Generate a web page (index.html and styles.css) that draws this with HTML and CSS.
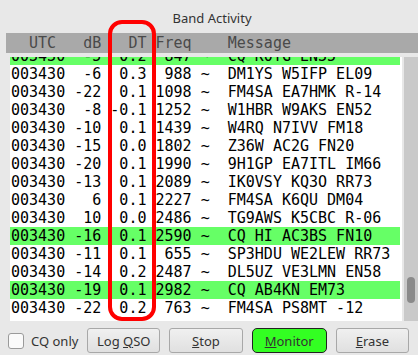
FILE: index.html
```html
<!DOCTYPE html>
<html>
<head>
<meta charset="utf-8">
<link rel="stylesheet" href="styles.css">
</head>
<body>
<div class="window">
  <div class="title">Band Activity</div>
  <div class="colhead">  UTC   dB   DT Freq    Message</div>
  <div class="listwrap">
    <div class="list">
      <div class="rows">
        <div class="row cq">003430  -5  0.2  847 ~  CQ K0TG EN35</div>
        <div class="row">003430  -6  0.3  988 ~  DM1YS W5IFP EL09</div>
        <div class="row">003430 -22  0.1 1098 ~  FM4SA EA7HMK R-14</div>
        <div class="row">003430  -8 -0.1 1252 ~  W1HBR W9AKS EN52</div>
        <div class="row">003430 -10  0.1 1439 ~  W4RQ N7IVV FM18</div>
        <div class="row">003430 -15  0.0 1802 ~  Z36W AC2G FN20</div>
        <div class="row">003430 -20  0.1 1990 ~  9H1GP EA7ITL IM66</div>
        <div class="row">003430 -13  0.1 2089 ~  IK0VSY KQ3O RR73</div>
        <div class="row">003430   6  0.1 2227 ~  FM4SA K6QU DM04</div>
        <div class="row">003430  10  0.0 2486 ~  TG9AWS K5CBC R-06</div>
        <div class="row cq">003430 -16  0.1 2590 ~  CQ HI AC3BS FN10</div>
        <div class="row">003430 -11  0.1  655 ~  SP3HDU WE2LEW RR73</div>
        <div class="row">003430 -14  0.2 2487 ~  DL5UZ VE3LMN EN58</div>
        <div class="row cq">003430 -19  0.1 2982 ~  CQ AB4KN EM73</div>
        <div class="row">003430 -22  0.2  763 ~  FM4SA PS8MT -12</div>
      </div>
    </div>
    <div class="scrollbar"><div class="thumb"></div></div>
  </div>
  <div class="controls">
    <label class="check"><span class="box"></span>CQ only</label>
    <button class="btn">Log <u>Q</u>SO</button>
    <button class="btn"><u>S</u>top</button>
    <button class="btn monitor"><u>M</u>onitor</button>
    <button class="btn"><u>E</u>rase</button>
  </div>
  <div class="highlight"></div>
</div>
</body>
</html>
```

FILE: styles.css
```css
html, body {
  margin: 0;
  padding: 0;
  background: #e8e8e8;
}
.window {
  position: relative;
  width: 418px;
  height: 355px;
  overflow: hidden;
  font-family: "Noto Sans", "DejaVu Sans", sans-serif;
  color: #333;
}
.title {
  height: 33px;
  line-height: 36px;
  text-align: center;
  font-size: 13px;
  padding-left: 6px;
  box-sizing: border-box;
}
.colhead {
  margin-left: 6px;
  height: 20px;
  line-height: 20px;
  background: #a9a9a9;
  color: #4a4a4a;
  font-family: "DejaVu Sans Mono", monospace;
  font-size: 15px;
  white-space: pre;
  padding-left: 5px;
}
.listwrap {
  display: flex;
  margin-top: 4px;
  margin-left: 10px;
  height: 264px;
}
.list {
  width: 392px;
  background: #fff;
  overflow: hidden;
}
.rows {
  margin-top: -10px;
}
.row {
  height: 18px;
  line-height: 18px;
  font-family: "DejaVu Sans Mono", monospace;
  font-size: 15px;
  color: #000;
  white-space: pre;
  padding-left: 1px;
}
.row.cq {
  background: #66ff66;
  margin-right: 2px;
}
.scrollbar {
  position: relative;
  width: 14px;
  margin-left: 2px;
  background: #c9c9c9;
}
.thumb {
  position: absolute;
  left: 3px;
  top: 220px;
  width: 8px;
  height: 26px;
  border-radius: 4px;
  background: #8a8a8a;
}
.controls {
  display: flex;
  align-items: center;
  margin-top: 7px;
  padding-left: 8px;
  height: 25px;
}
.check {
  display: flex;
  align-items: center;
  font-size: 13px;
  color: #333;
  width: 80px;
}
.box {
  width: 14px;
  height: 14px;
  border: 1px solid #9a9a9a;
  border-radius: 3px;
  background: #fafafa;
  margin-right: 7px;
}
.btn {
  width: 74px;
  height: 25px;
  margin-right: 9px;
  padding: 0;
  border: 1px solid #a8a8a8;
  border-radius: 3px;
  background: linear-gradient(#f0f0f0, #e0e0e0);
  font-family: "Noto Sans", "DejaVu Sans", sans-serif;
  font-size: 13px;
  color: #333;
}
.btn.monitor {
  width: 76px;
  background: #33ff22;
  border-color: #222;
  border-radius: 5px;
}
.highlight {
  position: absolute;
  left: 108px;
  top: 20px;
  width: 48px;
  height: 301px;
  box-sizing: border-box;
  border: 4px solid #ff0000;
  border-radius: 14px;
}
```
